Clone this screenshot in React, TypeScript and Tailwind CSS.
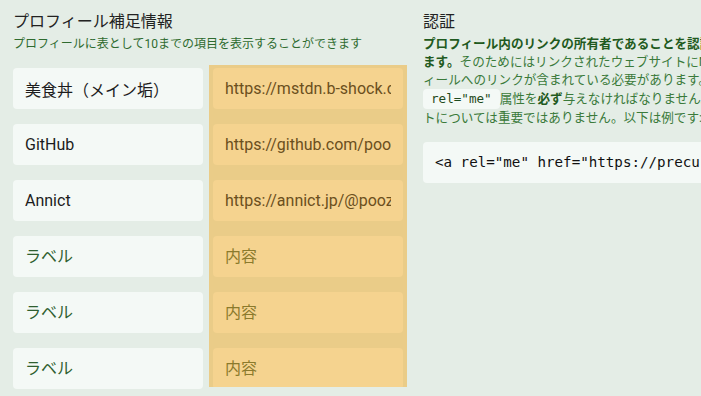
const FONT = "font-['Roboto','Noto_Sans_CJK_JP',sans-serif]";

type Field = { label: string; value: string };

const fields: Field[] = [
  { label: "美食丼（メイン垢）", value: "https://mstdn.b-shock.co.jp/@pooza" },
  { label: "GitHub", value: "https://github.com/pooza" },
  { label: "Annict", value: "https://annict.jp/@pooza" },
  { label: "", value: "" },
  { label: "", value: "" },
  { label: "", value: "" },
];

function FieldColumns() {
  return (
    <div className="mt-[13px] flex gap-[6px]">
      <div className="flex w-[190px] flex-col gap-[15px] pt-[3px]">
        {fields.map((field, i) => (
          <input
            key={i}
            readOnly
            defaultValue={field.label}
            placeholder="ラベル"
            className="h-[41px] w-full rounded-[4px] bg-[#f4f9f6] px-3 text-[16px] text-[#1c1c1c] outline-none placeholder:text-[#2f5f30]"
          />
        ))}
      </div>
      {/* highlighted value column */}
      <div className="flex h-[322px] w-[198px] flex-col gap-[15px] overflow-hidden bg-[#eacc88] px-[4px] pt-[3px]">
        {fields.map((field, i) => (
          <input
            key={i}
            readOnly
            defaultValue={field.value}
            placeholder="内容"
            className="h-[41px] w-full shrink-0 rounded-[4px] bg-[#f5d38f] px-3 text-[16px] text-[#6b4f1d] outline-none placeholder:text-[#8b7a2c]"
          />
        ))}
      </div>
    </div>
  );
}

export default function App() {
  return (
    <div className={`${FONT} flex h-[396px] w-full gap-4 overflow-hidden bg-[#e4ede6] pl-[13px] pt-[12px]`}>
      <section className="w-[394px] shrink-0">
        <h2 className="text-[16px] leading-[20px] text-[#222]">プロフィール補足情報</h2>
        <p className="mt-[4px] text-[12px] leading-[16px] text-[#2e6b2f]">
          プロフィールに表として10までの項目を表示することができます
        </p>
        <FieldColumns />
      </section>

      <section className="w-[420px] shrink-0">
        <h2 className="text-[16px] leading-[20px] text-[#222]">認証</h2>
        <p className="mt-[3px] whitespace-nowrap text-[12.6px] leading-[18px] text-[#3a7a3a]">
          <strong className="font-bold text-[#1f5a20]">
            プロフィール内のリンクの所有者であることを認証でき
            <br />
            ます。
          </strong>
          そのためにはリンクされたウェブサイトにMastodonプロフ
          <br />
          ィールへのリンクが含まれている必要があります。その際、リンクには
          <br />
          <code className="inline-block rounded-[4px] bg-[#f4f9f6] px-[8px] font-['DejaVu_Sans_Mono',monospace] text-[12.6px] leading-[20px] text-[#1f4a20]">
            rel="me"
          </code>
          属性を<strong className="font-bold text-[#1f5a20]">必ず</strong>
          与えなければなりません。リンクのテキス
          <br />
          トについては重要ではありません。以下は例です:
        </p>
        <div className="mt-[15px] flex h-[41px] items-center whitespace-nowrap rounded-[4px] bg-[#f4f9f6] px-3 font-['DejaVu_Sans_Mono',monospace] text-[14.2px] text-[#111]">
          {'<a rel="me" href="https://precure.ml/@pooza">Mastodon</a>'}
        </div>
      </section>
    </div>
  );
}
